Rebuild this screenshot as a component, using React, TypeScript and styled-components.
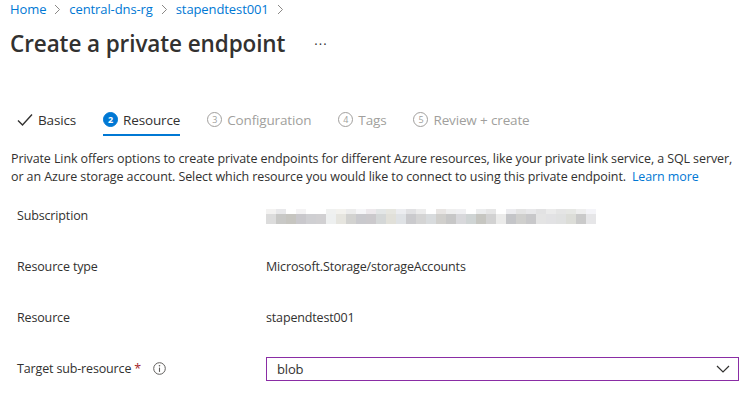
import React from "react";
import styled, { createGlobalStyle } from "styled-components";

const GlobalStyle = createGlobalStyle`
  body {
    margin: 0;
    background: #fff;
    font-family: "Segoe UI", "Open Sans", sans-serif;
    color: #323130;
  }
`;

const Page = styled.div`
  width: 753px;
  height: 400px;
  overflow: hidden;
  padding: 0 10px;
  box-sizing: border-box;
`;

const Crumbs = styled.nav`
  display: flex;
  align-items: center;
  height: 18px;
  font-size: 13px;
  letter-spacing: -0.1px;
`;

const Crumb = styled.a`
  color: #0078d4;
  text-decoration: none;
`;

const Chevron = styled.span`
  color: #8a8886;
  margin: 0 8px;
  display: flex;
`;

const TitleRow = styled.div`
  display: flex;
  align-items: center;
  height: 50px;
`;

const Title = styled.h1`
  margin: 0;
  font-size: 22.5px;
  font-weight: 600;
  letter-spacing: -0.1px;
  color: #323130;
`;

const More = styled.span`
  margin-left: 29px;
  font-size: 13px;
  letter-spacing: 1px;
  margin-top: -6px;
`;

const Tabs = styled.div`
  display: flex;
  align-items: stretch;
  margin-top: 38px;
  padding-left: 7px;
  gap: 27px;
  height: 30px;
`;

const Tab = styled.div<{ $active?: boolean; $disabled?: boolean }>`
  display: flex;
  align-items: center;
  gap: 5px;
  font-size: 13.5px;
  letter-spacing: -0.15px;
  color: ${(p) => (p.$disabled ? "#a19f9d" : "#323130")};
  border-bottom: 2px solid ${(p) => (p.$active ? "#0078d4" : "transparent")};
  padding-bottom: 1px;
`;

const StepNum = styled.span<{ $active?: boolean }>`
  width: 15px;
  height: 15px;
  border-radius: 50%;
  box-sizing: border-box;
  display: inline-flex;
  align-items: center;
  justify-content: center;
  font-size: 9px;
  letter-spacing: 0;
  font-weight: ${(p) => (p.$active ? 700 : 400)};
  background: ${(p) => (p.$active ? "#0078d4" : "transparent")};
  color: ${(p) => (p.$active ? "#fff" : "#a19f9d")};
  border: 1px solid ${(p) => (p.$active ? "#0078d4" : "#a19f9d")};
`;

const Intro = styled.p`
  margin: 14px 0 0 1px;
  max-width: 732px;
  font-size: 12.5px;
  letter-spacing: -0.1px;
  line-height: 18px;
  color: #323130;
`;

const Link = styled.a`
  color: #0078d4;
  text-decoration: none;
  margin-left: 6px;
  white-space: nowrap;
`;

const Fields = styled.div`
  margin-top: 4px;
  display: flex;
  flex-direction: column;
`;

const Row = styled.div`
  display: grid;
  grid-template-columns: 249px 1fr;
  align-items: center;
  height: 51px;
  padding-left: 7px;
  font-size: 12.5px;
  letter-spacing: -0.15px;
`;

const Label = styled.div`
  display: flex;
  align-items: center;
  color: #323130;
`;

const Required = styled.span`
  color: #a4262c;
  margin-left: 3px;
`;

const InfoIcon = styled.span`
  margin-left: 12px;
  display: flex;
`;

const Value = styled.div`
  color: #323130;
`;

const Select = styled.div`
  display: flex;
  align-items: center;
  justify-content: space-between;
  height: 24px;
  margin-right: 4px;
  border: 1px solid #8a2da5;
  padding: 0 8px 0 10px;
  box-sizing: border-box;
  font-size: 13px;
`;

const blurCols = [
  ["#f3f2f1", "#dcdcdc"],
  ["#e8e8ea", "#c8c8c6"],
  ["#ffffff", "#c6c5c0"],
  ["#f4f3f4", "#c9c8cc"],
  ["#ffffff", "#cfcfd2"],
  ["#ffffff", "#d1d0d2"],
  ["#f0f1f0", "#eef0f0"],
  ["#f3f2ee", "#e6e5df"],
  ["#ececec", "#d2d2d0"],
  ["#f6f6f8", "#c9c9cd"],
  ["#ede9ec", "#cbc9cc"],
  ["#e3e6e6", "#d4d7d7"],
  ["#e6e6e0", "#e1e0d9"],
  ["#ecedf0", "#dfe2e5"],
  ["#e1e1e3", "#cacacd"],
  ["#ececec", "#d4d4d4"],
  ["#ffffff", "#d8dbdd"],
  ["#e8e5e3", "#d0cfcc"],
  ["#efefef", "#c7c7c7"],
  ["#f0f0f2", "#d8d8db"],
  ["#ffffff", "#cfd4d4"],
  ["#ecedee", "#c6c6c1"],
  ["#e6e6e6", "#d2d2d2"],
  ["#ffffff", "#ebebea"],
  ["#ececef", "#c4c5c8"],
  ["#e4e4e4", "#cfcfcd"],
  ["#e8e8ea", "#c8c8ca"],
  ["#e2e2e3", "#e4e4e4"],
  ["#ebebeb", "#e2e2e4"],
  ["#e5e5e5", "#e0e1e1"],
  ["#e6e7e4", "#dcddd8"],
  ["#eeeeee", "#cacaca"],
  ["#f4f4f8", "#e6e6e8"],
];

const Blurred = () => (
  <svg width="340" height="18" viewBox="0 0 340 18" style={{ display: "block" }}>
    {blurCols.map(([top, bottom], i) => (
      <g key={i}>
        <rect x={i * 10} y={2} width={10} height={5} fill={top} />
        <rect x={i * 10} y={7} width={10} height={10} fill={bottom} />
      </g>
    ))}
  </svg>
);

const ChevronRight = () => (
  <svg width="7" height="11" viewBox="0 0 7 11">
    <path d="M1 1l4.5 4.5L1 10" fill="none" stroke="#8a8886" strokeWidth="1" />
  </svg>
);

const Check = () => (
  <svg width="16" height="14" viewBox="0 0 16 14">
    <path d="M1 7.5l4.5 4.5L15 1.5" fill="none" stroke="#323130" strokeWidth="1.4" />
  </svg>
);

const Info = () => (
  <svg width="13" height="13" viewBox="0 0 13 13">
    <circle cx="6.5" cy="6.5" r="5.8" fill="none" stroke="#605e5c" strokeWidth="1" />
    <circle cx="6.5" cy="3.8" r="0.8" fill="#605e5c" />
    <path d="M6.5 5.6v4.3" stroke="#605e5c" strokeWidth="1.1" />
  </svg>
);

const ChevronDown = () => (
  <svg width="14" height="8" viewBox="0 0 14 8">
    <path d="M1 1l6 6 6-6" fill="none" stroke="#323130" strokeWidth="1.2" />
  </svg>
);

const steps = [
  { n: 3, label: "Configuration" },
  { n: 4, label: "Tags" },
  { n: 5, label: "Review + create" },
];

export default function App() {
  return (
    <Page>
      <GlobalStyle />
      <Crumbs>
        <Crumb>Home</Crumb>
        <Chevron>
          <ChevronRight />
        </Chevron>
        <Crumb>central-dns-rg</Crumb>
        <Chevron>
          <ChevronRight />
        </Chevron>
        <Crumb>stapendtest001</Crumb>
        <Chevron>
          <ChevronRight />
        </Chevron>
      </Crumbs>
      <TitleRow>
        <Title>Create a private endpoint</Title>
        <More>...</More>
      </TitleRow>
      <Tabs>
        <Tab>
          <Check />
          Basics
        </Tab>
        <Tab $active>
          <StepNum $active>2</StepNum>
          Resource
        </Tab>
        {steps.map((s) => (
          <Tab key={s.n} $disabled>
            <StepNum>{s.n}</StepNum>
            {s.label}
          </Tab>
        ))}
      </Tabs>
      <Intro>
        Private Link offers options to create private endpoints for different Azure resources, like your
        private link service, a SQL server, or an Azure storage account. Select which resource you would
        like to connect to using this private endpoint.
        <Link>Learn more</Link>
      </Intro>
      <Fields>
        <Row>
          <Label>Subscription</Label>
          <Value>
            <Blurred />
          </Value>
        </Row>
        <Row>
          <Label>Resource type</Label>
          <Value>Microsoft.Storage/storageAccounts</Value>
        </Row>
        <Row>
          <Label>Resource</Label>
          <Value>stapendtest001</Value>
        </Row>
        <Row>
          <Label>
            Target sub-resource<Required>*</Required>
            <InfoIcon>
              <Info />
            </InfoIcon>
          </Label>
          <Select>
            blob
            <ChevronDown />
          </Select>
        </Row>
      </Fields>
    </Page>
  );
}
